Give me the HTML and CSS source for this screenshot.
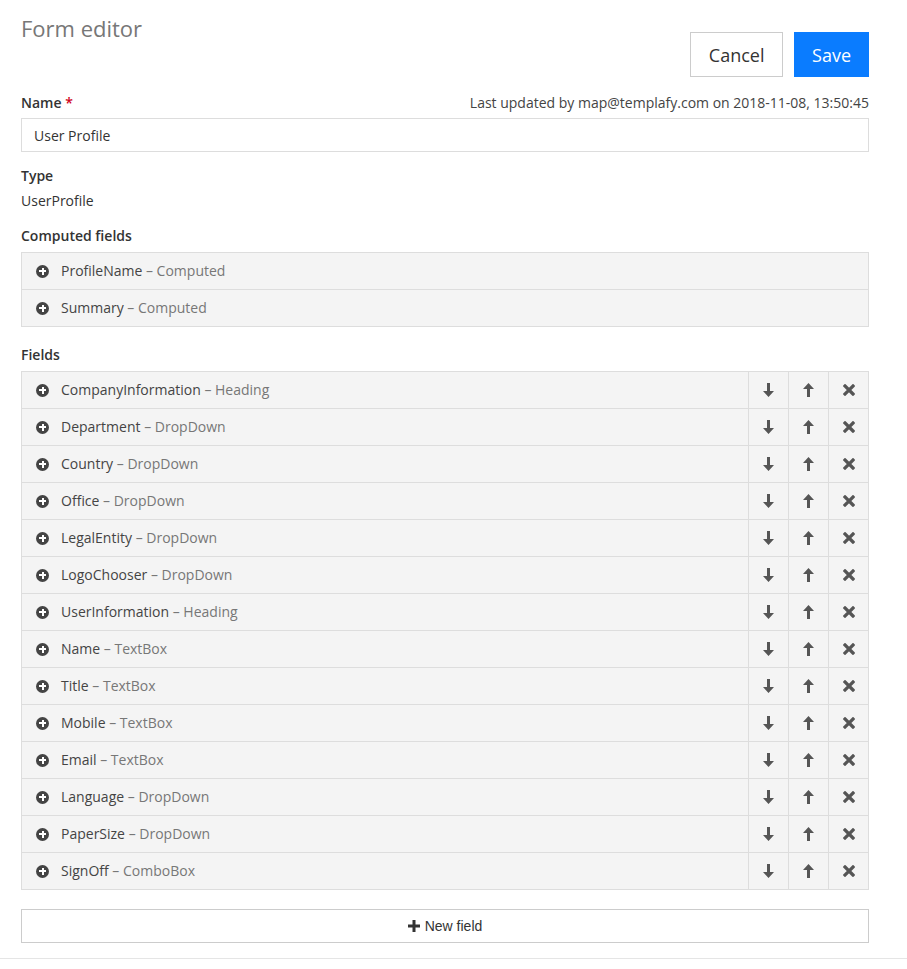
FILE: index.html
```html
<!DOCTYPE html>
<html lang="en">

<head>
    <meta charset="UTF-8">
    <meta name="viewport" content="width=device-width, initial-scale=1.0">
    <title>Form editor</title>
    <link rel="stylesheet" href="styles.css">
</head>

<body>

    <div class="page">
        <div class="header">
            <h1>Form editor</h1>
            <div class="actions">
                <button class="btn btn-cancel">Cancel</button>
                <button class="btn btn-save">Save</button>
            </div>
        </div>

        <div class="name-row">
            <label class="label" for="name">Name <span class="required">*</span></label>
            <span class="updated">Last updated by map@templafy.com on 2018-11-08, 13:50:45</span>
        </div>
        <input class="text-input" type="text" id="name" value="User Profile">

        <div class="label type-label">Type</div>
        <div class="value">UserProfile</div>

        <div class="label section-label">Computed fields</div>
        <div class="list">
            <div class="row">
                <div class="row-name"><span class="plus-icon"></span>ProfileName <span class="kind">– Computed</span></div>
            </div>
            <div class="row">
                <div class="row-name"><span class="plus-icon"></span>Summary <span class="kind">– Computed</span></div>
            </div>
        </div>

        <div class="label section-label fields-label">Fields</div>
        <div class="list" id="fields"></div>

        <button class="new-field">
            <svg class="new-icon" width="12" height="12" viewBox="0 0 12 12"><path d="M4.5 0h3v4.5H12v3H7.5V12h-3V7.5H0v-3h4.5z" fill="#333" /></svg>New field
        </button>
    </div>
    <div class="footer-line"></div>

    <script>
        var fields = [
            ['CompanyInformation', 'Heading'],
            ['Department', 'DropDown'],
            ['Country', 'DropDown'],
            ['Office', 'DropDown'],
            ['LegalEntity', 'DropDown'],
            ['LogoChooser', 'DropDown'],
            ['UserInformation', 'Heading'],
            ['Name', 'TextBox'],
            ['Title', 'TextBox'],
            ['Mobile', 'TextBox'],
            ['Email', 'TextBox'],
            ['Language', 'DropDown'],
            ['PaperSize', 'DropDown'],
            ['SignOff', 'ComboBox']
        ];

        var down = '<svg width="11" height="14" viewBox="0 0 11 14"><path d="M4 0h3v8h4l-5.5 6L0 8h4z" fill="#555"/></svg>';
        var up = '<svg width="11" height="14" viewBox="0 0 11 14"><path d="M4 14h3V6h4L5.5 0 0 6h4z" fill="#555"/></svg>';
        var remove = '<svg width="12" height="12" viewBox="0 0 12 12"><path d="M2 2L10 10M10 2L2 10" stroke="#555" stroke-width="3.2" stroke-linecap="square"/></svg>';

        var list = document.getElementById('fields');
        fields.forEach(function (f) {
            var row = document.createElement('div');
            row.className = 'row';
            row.innerHTML = '<div class="row-name"><span class="plus-icon"></span>' + f[0] +
                ' <span class="kind">– ' + f[1] + '</span></div>' +
                '<button class="row-btn">' + down + '</button>' +
                '<button class="row-btn">' + up + '</button>' +
                '<button class="row-btn">' + remove + '</button>';
            list.appendChild(row);
        });
    </script>

</body>

</html>
```

FILE: styles.css
```css
body {
    font-family: "Open Sans", Arial, sans-serif;
    font-size: 14px;
    color: #333;
    background-color: #fff;
    margin: 0;
    padding: 0;
}

.page {
    width: 848px;
    padding: 0 38px 0 21px;
}

.header {
    display: flex;
    justify-content: space-between;
    align-items: flex-start;
}

h1 {
    margin: 13px 0 0;
    font-size: 22px;
    font-weight: normal;
    color: #777;
}

.actions {
    display: flex;
    gap: 11px;
    margin-top: 32px;
}

.btn {
    font-family: inherit;
    font-size: 18px;
    height: 45px;
    padding: 0 17px;
    cursor: pointer;
}

.btn-cancel {
    background: #fff;
    color: #333;
    border: 1px solid #ccc;
    padding: 0 17.5px;
}

.btn-save {
    background: #0a7cff;
    color: #fff;
    border: 1px solid #0a7cff;
}

.name-row {
    display: flex;
    justify-content: space-between;
    margin-top: 16px;
    line-height: 20px;
}

.label {
    font-weight: 600;
    color: #333;
    line-height: 20px;
}

.required {
    color: #d0021b;
}

.updated {
    color: #444;
}

.text-input {
    display: block;
    box-sizing: border-box;
    width: 100%;
    height: 34px;
    margin-top: 5px;
    padding: 0 12px;
    border: 1px solid #ddd;
    font-family: inherit;
    font-size: 14px;
    color: #333;
}

.type-label {
    margin-top: 14px;
}

.value {
    line-height: 20px;
    margin-top: 5px;
}

.section-label {
    margin-top: 15px;
    margin-bottom: 6px;
}

.fields-label {
    margin-top: 18px;
}

.list {
    border: 1px solid #ddd;
    border-bottom: none;
    background: #f4f4f4;
}

.row {
    display: flex;
    height: 36px;
    border-bottom: 1px solid #ddd;
}

.row-name {
    flex: 1;
    display: flex;
    align-items: center;
    padding: 0 0 2px 14px;
    color: #444;
    white-space: pre;
}

.kind {
    color: #777;
}

.plus-icon {
    position: relative;
    width: 13px;
    height: 13px;
    border-radius: 50%;
    background: #444;
    margin: 2px 12px 0 0;
}

.plus-icon::before,
.plus-icon::after {
    content: "";
    position: absolute;
    background: #fff;
    left: 3px;
    top: 5.5px;
    width: 7px;
    height: 2px;
}

.plus-icon::after {
    left: 5.5px;
    top: 3px;
    width: 2px;
    height: 7px;
}

.row-btn {
    width: 40px;
    height: 36px;
    border: none;
    border-left: 1px solid #ddd;
    background: transparent;
    display: flex;
    align-items: center;
    justify-content: center;
    padding: 0;
    cursor: pointer;
}

.new-field {
    display: flex;
    align-items: center;
    justify-content: center;
    width: 100%;
    height: 34px;
    margin-top: 19px;
    background: #fff;
    border: 1px solid #ccc;
    font-family: "Liberation Sans", Arial, sans-serif;
    font-size: 14px;
    color: #333;
    cursor: pointer;
}

.new-icon {
    margin-right: 5px;
}

.footer-line {
    margin-top: 15px;
    border-top: 1px solid #e5e5e5;
}
```
